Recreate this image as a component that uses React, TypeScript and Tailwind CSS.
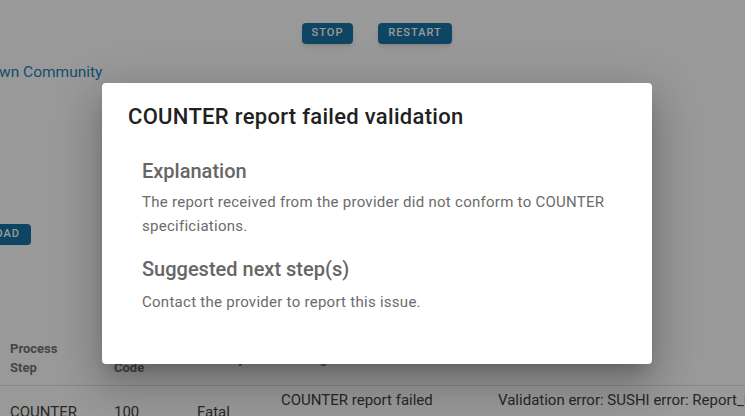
export default function App() {
  return (
    <div className="relative w-[745px] h-[416px] overflow-hidden bg-white font-['Roboto',sans-serif]">
      {/* underlying page */}
      <div className="flex flex-col">
        <div className="flex gap-[25px] pl-[302px] pt-[23px]">
          <button className="h-[21px] w-[51px] rounded-[4px] bg-[#1773a5] text-white text-[11px] font-medium tracking-[1px] shadow-md flex items-center justify-center">
            STOP
          </button>
          <button className="h-[21px] w-[74px] rounded-[4px] bg-[#1773a5] text-white text-[11px] font-medium tracking-[1px] shadow-md flex items-center justify-center">
            RESTART
          </button>
        </div>
        <div className="mt-[18px] -ml-[1px] text-[15.5px] leading-[20px] text-[#2383b8] whitespace-nowrap">wn Community</div>
        <div className="mt-[142px] w-[31px] overflow-hidden flex justify-end">
          <button className="shrink-0 h-[21px] w-[90px] rounded-[4px] bg-[#1773a5] text-white text-[11px] font-medium tracking-[1px] shadow-md flex items-center justify-center">
            DOWNLOAD
          </button>
        </div>
        <div className="mt-[94px] grid grid-cols-[104px_83px_84px_217px_1fr] pl-[10px] border-b border-[#e0e0e0] pb-[8px] text-[13px] leading-[19px] font-bold text-[#757575]">
          <div>Process<br />Step</div>
          <div>Error<br />Code</div>
          <div className="self-center">Severity</div>
          <div className="self-center">Message</div>
          <div className="self-center">Data</div>
        </div>
        <div className="grid grid-cols-[104px_83px_84px_217px_1fr] pl-[10px] text-[15px] leading-[24px] text-[#444444] whitespace-nowrap">
          <div className="pt-[14px]">COUNTER</div>
          <div className="pt-[14px]">100</div>
          <div className="pt-[14px]">Fatal</div>
          <div className="pt-[2px]">COUNTER report failed<br />validation</div>
          <div className="pt-[2px]">Validation error: SUSHI error: Report_Header</div>
        </div>
      </div>

      {/* backdrop */}
      <div className="absolute inset-0 bg-black/40" />

      {/* dialog */}
      <div className="absolute left-[102px] top-[83px] w-[550px] h-[281px] bg-white rounded-[4px] shadow-[0_11px_15px_-7px_rgba(0,0,0,0.2),0_24px_38px_3px_rgba(0,0,0,0.14),0_9px_46px_8px_rgba(0,0,0,0.12)] flex flex-col">
        <div className="pt-[18px] pl-[26px] text-[22px] leading-[32px] font-medium text-[#212121] tracking-[0.3px]">
          COUNTER report failed validation
        </div>
        <div className="mt-[24px] pl-[40px] pr-[24px] flex flex-col">
          <div className="text-[20px] leading-[28px] font-medium text-[#666666]">Explanation</div>
          <div className="mt-[5px] text-[15px] leading-[24px] text-[#6b6b6b] tracking-[0.27px]">
            The report received from the provider did not conform to COUNTER specificiations.
          </div>
          <div className="mt-[17px] text-[20px] leading-[28px] font-medium text-[#666666]">Suggested next step(s)</div>
          <div className="mt-[7px] text-[15px] leading-[24px] text-[#6b6b6b] tracking-[0.27px]">
            Contact the provider to report this issue.
          </div>
        </div>
      </div>
    </div>
  );
}
